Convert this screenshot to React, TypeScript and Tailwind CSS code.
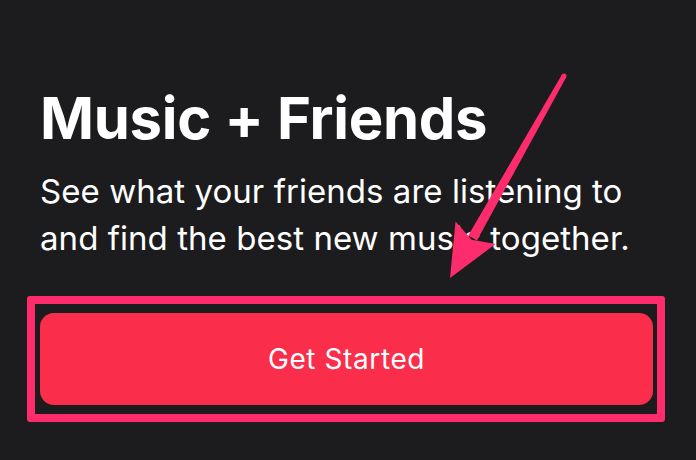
import React from "react";

export default function App() {
  // arrow geometry
  const tail = { x: 564, y: 76 };
  const tip = { x: 450, y: 278 };
  const dx = tip.x - tail.x;
  const dy = tip.y - tail.y;
  const len = Math.hypot(dx, dy);
  const ux = dx / len;
  const uy = dy / len;
  const px = -uy;
  const py = ux;
  const headLen = 52;
  const headHalf = 23;
  const bx = tip.x - ux * headLen;
  const by = tip.y - uy * headLen;
  const tw = 2.5;
  const bw = 5;
  const shaft = [
    [tail.x + px * tw, tail.y + py * tw],
    [bx + ux * 6 + px * bw, by + uy * 6 + py * bw],
    [bx + ux * 6 - px * bw, by + uy * 6 - py * bw],
    [tail.x - px * tw, tail.y - py * tw],
  ]
    .map((p) => p.join(","))
    .join(" ");
  const head = [
    [tip.x, tip.y],
    [bx + px * headHalf, by + py * headHalf],
    [bx + ux * 8, by + uy * 8],
    [bx - px * headHalf, by - py * headHalf],
  ]
    .map((p) => p.join(","))
    .join(" ");

  return (
    <div
      className="relative w-[696px] h-[460px] overflow-hidden bg-[#1c1c1e] text-white"
      style={{ fontFamily: "Inter, 'Noto Sans', sans-serif" }}
    >
      <div className="pl-[40px] pt-[89px]">
        <h1 className="text-[58px] leading-[58px] font-bold tracking-[-0.3px]">
          Music + Friends
        </h1>
        <p className="mt-[21px] text-[33px] leading-[47px] font-normal tracking-[0.05px]">
          See what your friends are listening to
          <br />
          and find the best new music together.
        </p>
      </div>
      <div className="ml-[27px] mt-[34px] w-[638px] h-[126px] border-[8px] border-[#fe2c6c] rounded-[3px] pl-[5px] pr-[4px] py-[9px]">
        <div className="w-full h-full rounded-[14px] bg-[#fa2d4a] flex items-center justify-center">
          <span className="text-[28px] font-normal tracking-[0.6px] text-white">
            Get Started
          </span>
        </div>
      </div>
      <svg
        className="absolute inset-0 pointer-events-none"
        width="696"
        height="460"
        viewBox="0 0 696 460"
      >
        <polygon points={shaft} fill="#fe2c6c" strokeLinejoin="round" />
        <circle cx={tail.x} cy={tail.y} r={2.5} fill="#fe2c6c" />
        <polygon points={head} fill="#fe2c6c" strokeLinejoin="round" />
      </svg>
    </div>
  );
}
